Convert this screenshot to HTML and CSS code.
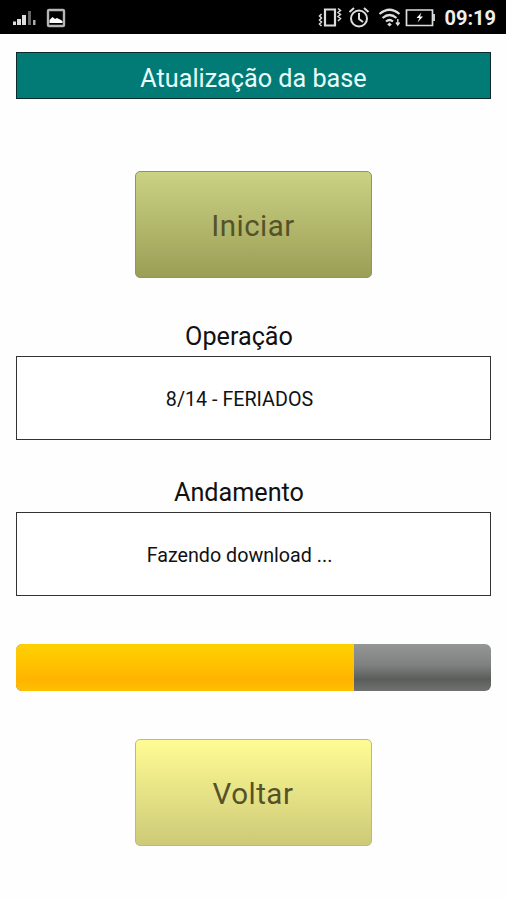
FILE: index.html
```
<!DOCTYPE html>
<html lang="pt-BR">
<head>
    <meta charset="UTF-8">
    <meta name="viewport" content="width=device-width, initial-scale=1.0">
    <title>Atualização da base</title>
    <link rel="stylesheet" href="styles.css">
</head>
<body>

    <div class="status-bar">
        <svg class="signal" width="24" height="34" viewBox="0 0 24 34" fill="#ddd">
            <path d="M1 21.500h3V25H1zM5 19h4v6H5zM10 15h4v10h-4z"/>
            <path d="M16 11h3v14h-3z" fill="#666"/>
            <path d="M21 20h2.500v5H21z" fill="#aaa"/>
        </svg>
        <svg class="picture" width="20" height="34" viewBox="0 0 20 34">
            <rect x="2" y="10" width="16" height="16" rx="1" fill="none" stroke="#b5b5b5" stroke-width="2.400"/>
            <path d="M3.500 23v-3l3-3 2.500 2 2-1 3 1.500 2.500 1.500v2z" fill="#fff"/>
        </svg>

        <div class="status-right">
            <svg width="25" height="34" viewBox="0 0 25 34" fill="none" stroke="#ddd">
                <path d="M7 9.500h10v16H7z" stroke-width="2.200"/>
                <path d="M3.500 14l-2 2 2 2-2 2 2 2-2 2 2 2M20 8.500l2.500 2-2.500 2 2.500 2-2.500 2 2.500 2-2.500 2.500" stroke-width="1.500"/>
            </svg>
            <svg class="alarm" width="22" height="34" viewBox="0 0 22 34" fill="none" stroke="#ddd" stroke-width="2">
                <circle cx="11" cy="18.500" r="8"/>
                <path d="M1.500 12l4.500-4M20.500 12L16 8M11 13v6l4 3"/>
            </svg>
            <svg class="wifi" width="24" height="34" viewBox="0 0 24 34" fill="none" stroke="#ddd" stroke-width="2.200">
                <path d="M1.500 14q10-8.500 20 0M4.500 18q7-6 14 0M8 21.500q3.500-3 7 0"/>
                <path d="M11.500 22.500l2.300 2-2.300 2-2.300-2z" fill="#ddd" stroke="none"/>
                <path d="M19.800 19v6M18 22.500l1.800 2.500 1.800-2.500" stroke-width="1.400"/>
            </svg>
            <svg class="battery" width="30" height="34" viewBox="0 0 30 34" fill="none" stroke="#ddd">
                <path d="M1.500 10h26v15.500h-26z" stroke-width="1.700"/>
                <path d="M29 14v7" stroke-width="1.800"/>
                <path d="M16.500 12.500l-5 5.500h3l-2 4.500 5.500-6H15z" fill="#fff" stroke="none"/>
            </svg>
            <span class="clock">09:19</span>
        </div>
    </div>

    <div class="screen">
        <h1>Atualização da base</h1>

        <button class="btn btn-start"><span>Iniciar</span></button>

        <div class="field">
            <label>Operação</label>
            <div class="value"><span id="operacao">8/14 - FERIADOS</span></div>
        </div>

        <div class="field">
            <label>Andamento</label>
            <div class="value"><span id="andamento">Fazendo download ...</span></div>
        </div>

        <div class="progress">
            <div class="progress-fill" style="width: 71.2%"></div>
        </div>

        <button class="btn btn-back"><span>Voltar</span></button>
    </div>

</body>
</html>
```

FILE: styles.css
```
* {
    box-sizing: border-box;
}
body {
    margin: 0;
    height: 900px;
    overflow: hidden;
    background: #fefefe;
    color: #111;
    font-family: Roboto, sans-serif;
}
.status-bar {
    display: flex;
    height: 34px;
    padding: 0 10px 0 12px;
    background: #000;
}
.picture {
    margin-left: 10px;
}
.status-right {
    display: flex;
    margin-left: auto;
}
.alarm {
    margin-left: 5px;
}
.wifi {
    margin-left: 8px;
}
.battery {
    margin-left: 3px;
}
.clock {
    margin-left: 9px;
    color: #eee;
    font-size: 20px;
    font-weight: bold;
    line-height: 36px;
}
.screen {
    display: flex;
    flex-direction: column;
    align-items: center;
    padding: 18px 15px 0 16px;
}
h1 {
    width: 100%;
    height: 47px;
    margin: 0 0 72px;
    border: 1px solid #0d2a2a;
    background: #027b77;
    color: #e8ffff;
    font-size: 25.200px;
    font-weight: normal;
    line-height: 51px;
    text-align: center;
}
.btn {
    width: 237px;
    height: 107px;
    margin-right: 1px;
    padding: 2px 0 0;
    border: 1px solid #8e9560;
    border-radius: 5px;
    color: #55522a;
    font-family: inherit;
    font-size: 29.500px;
    letter-spacing: 0.500px;
}
.btn-start {
    margin-bottom: 42px;
    background: linear-gradient(#cbd283, #9b9e56);
}
.btn-back {
    border-color: #b9b98a;
    background: linear-gradient(#fffb94, #cdca78);
}
.field {
    width: 100%;
    margin-bottom: 36px;
}
.field label {
    display: block;
    height: 36px;
    padding-right: 29px;
    font-size: 25.200px;
    line-height: 33px;
    text-align: center;
}
.value {
    display: flex;
    align-items: center;
    justify-content: center;
    height: 84px;
    padding: 2px 28px 0 0;
    border: 1px solid #333;
    background: #fff;
    font-size: 19.700px;
}
.progress {
    width: 100%;
    height: 47px;
    margin: 12px 0 48px;
    border-radius: 6px;
    overflow: hidden;
    background: linear-gradient(#949796, #7e8180 45%, #5b5d5a 75%, #70726f);
}
.progress-fill {
    height: 100%;
    background: linear-gradient(#ffd000, #ffc200 45%, #ffb300 75%, #ffc100);
}
```
